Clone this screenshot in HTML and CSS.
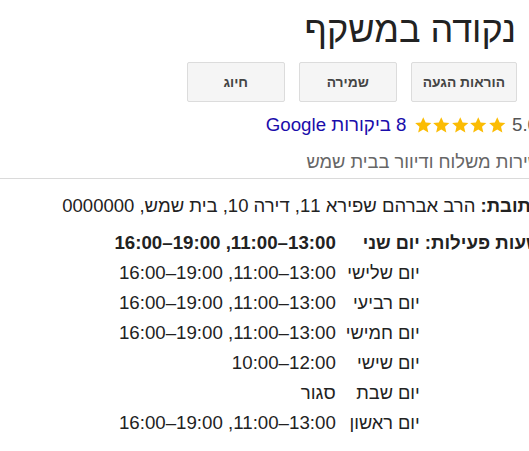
FILE: index.html
```html
<!DOCTYPE html>
<html lang="he" dir="rtl">
<head>
<meta charset="utf-8">
<title>נקודה במשקף</title>
<link rel="stylesheet" href="styles.css">
</head>
<body>
<div class="panel">
  <h1 class="title">נקודה במשקף</h1>
  <div class="actions">
    <button class="btn">הוראות הגעה</button>
    <button class="btn">שמירה</button>
    <button class="btn">חיוג</button>
  </div>
  <div class="rating">
    <span class="score">5.0</span>
    <span class="stars">
      <svg class="star" viewBox="0 0 24 24"><path d="M12 1.5l3.1 6.9 7.4.7-5.6 5 1.7 7.4L12 17.6l-6.6 3.9 1.7-7.4-5.6-5 7.4-.7z"/></svg>
      <svg class="star" viewBox="0 0 24 24"><path d="M12 1.5l3.1 6.9 7.4.7-5.6 5 1.7 7.4L12 17.6l-6.6 3.9 1.7-7.4-5.6-5 7.4-.7z"/></svg>
      <svg class="star" viewBox="0 0 24 24"><path d="M12 1.5l3.1 6.9 7.4.7-5.6 5 1.7 7.4L12 17.6l-6.6 3.9 1.7-7.4-5.6-5 7.4-.7z"/></svg>
      <svg class="star" viewBox="0 0 24 24"><path d="M12 1.5l3.1 6.9 7.4.7-5.6 5 1.7 7.4L12 17.6l-6.6 3.9 1.7-7.4-5.6-5 7.4-.7z"/></svg>
      <svg class="star" viewBox="0 0 24 24"><path d="M12 1.5l3.1 6.9 7.4.7-5.6 5 1.7 7.4L12 17.6l-6.6 3.9 1.7-7.4-5.6-5 7.4-.7z"/></svg>
    </span>
    <a class="reviews" href="#">8 ביקורות Google</a>
  </div>
  <div class="category">שירות משלוח ודיוור בבית שמש</div>
  <div class="divider"></div>
  <div class="address"><span class="label">כתובת:</span> הרב אברהם שפירא 11, דירה 10, בית שמש, 0000000</div>
  <div class="hours">
    <span class="label">שעות פעילות:</span>
    <table class="hours-table">
      <tr class="today"><td class="day">יום שני</td><td class="time"><span class="range">11:00–13:00</span>, <span class="range">16:00–19:00</span></td></tr>
      <tr><td class="day">יום שלישי</td><td class="time"><span class="range">11:00–13:00</span>, <span class="range">16:00–19:00</span></td></tr>
      <tr><td class="day">יום רביעי</td><td class="time"><span class="range">11:00–13:00</span>, <span class="range">16:00–19:00</span></td></tr>
      <tr><td class="day">יום חמישי</td><td class="time"><span class="range">11:00–13:00</span>, <span class="range">16:00–19:00</span></td></tr>
      <tr><td class="day">יום שישי</td><td class="time"><span class="range">10:00–12:00</span></td></tr>
      <tr><td class="day">יום שבת</td><td class="time">סגור</td></tr>
      <tr><td class="day">יום ראשון</td><td class="time"><span class="range">11:00–13:00</span>, <span class="range">16:00–19:00</span></td></tr>
    </table>
  </div>
</div>
</body>
</html>
```
FILE: styles.css
```css
html, body {
  overflow: hidden;
}
body {
  margin: 0;
  direction: rtl;
  font-family: "Liberation Sans", Arial, sans-serif;
  color: #222;
  background: #fff;
}
.panel {
  margin-right: -12px;
}
.title {
  margin: 0;
  padding: 10px 25px 0 0;
  font-size: 36px;
  font-weight: normal;
  line-height: 40px;
  color: #222;
}
.actions {
  display: flex;
  gap: 14px;
  padding: 12px 24px 0 0;
}
.btn {
  box-sizing: border-box;
  min-width: 98px;
  height: 40px;
  padding: 0 11px;
  border: 1px solid #dcdcdc;
  border-radius: 2px;
  background: #f5f5f5;
  color: #444;
  font-family: "Liberation Sans", Arial, sans-serif;
  font-weight: bold;
  font-size: 13.8px;
}
.rating {
  display: flex;
  align-items: center;
  height: 24px;
  margin-top: 11px;
  padding-right: 3px;
  font-size: 18.7px;
}
.score {
  color: #555;
}
.stars {
  display: flex;
  gap: 0;
  margin: 0 6px 0 7px;
}
.star {
  width: 18.5px;
  height: 18.5px;
  fill: #fbbc04;
}
.reviews {
  color: #1a0dab;
  text-decoration: none;
}
.category {
  margin-top: 13px;
  font-size: 18.3px;
  line-height: 24px;
  color: #666;
}
.divider {
  height: 1px;
  background: #dadada;
  margin: 4px -40px 0 -40px;
}
.address {
  margin-top: 15px;
  font-size: 18.5px;
  line-height: 24px;
}
.label {
  font-weight: bold;
}
.hours {
  display: flex;
  align-items: flex-start;
  gap: 5px;
  margin-top: 10px;
  font-size: 18.7px;
}
.hours .label {
  line-height: 30px;
}
.hours-table {
  border-collapse: collapse;
  font-size: 18.7px;
}
.hours-table td {
  padding: 0;
  height: 30px;
  line-height: 24px;
  vertical-align: middle;
}
.hours-table .day {
  padding-left: 10px;
  font-size: 18.2px;
  white-space: nowrap;
}
.hours-table .time {
  white-space: nowrap;
}
.range {
  direction: ltr;
  unicode-bidi: isolate;
}
.today td {
  font-weight: bold;
}
```
